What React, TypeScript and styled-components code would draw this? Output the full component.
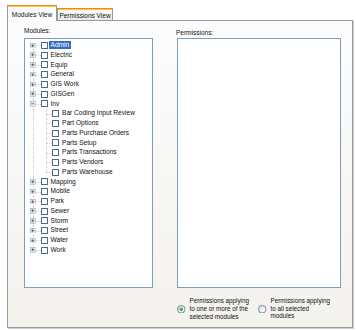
import React from "react";
import styled, { createGlobalStyle, css } from "styled-components";

const Global = createGlobalStyle`
  html, body { margin: 0; padding: 0; background: #ffffff; }
  body { font-family: "Liberation Sans", Arial, sans-serif; color: #000; }
  * { box-sizing: border-box; }
`;

const Page = styled.div`
  width: 356px;
  height: 331px;
  padding: 5px 0 0 7px;
  overflow: hidden;
`;

const TabStrip = styled.div`
  display: flex;
  align-items: flex-start;
  height: 16px;
  position: relative;
  z-index: 2;
  margin-bottom: -1px;
`;

const Tab = styled.div<{ $active?: boolean }>`
  display: flex;
  align-items: center;
  justify-content: center;
  font-size: 6.5px;
  white-space: nowrap;
  color: #111;
  border: 1px solid #919b9c;
  border-top: 1px solid #e68b2c;
  border-bottom: none;
  box-shadow: inset 0 1px 0 #ffc73c;
  ${(p) =>
    p.$active
      ? css`
          width: 50px;
          height: 16px;
          padding-top: 2px;
          background: #fcfcfe;
        `
      : css`
          width: 56px;
          height: 12px;
          margin-top: 3px;
          padding-top: 1px;
          background: linear-gradient(#fefefe, #ecebe5);
        `}
`;

const Panel = styled.div`
  width: 346px;
  height: 308px;
  border: 1px solid #919b9c;
  box-shadow: 1px 1px 0 #d3d1c7;
  background: linear-gradient(180deg, #fcfcfe 0%, #f3f2ed 100%);
  padding: 5px 0 0 16px;
  display: grid;
  grid-template-columns: 129px 164px;
  grid-template-rows: 12px 250px auto;
  column-gap: 24px;
`;

const FieldLabel = styled.div<{ $shift?: number }>`
  font-size: 6.5px;
  line-height: 10px;
  padding-top: ${(p) => p.$shift ?? 0}px;
  margin-left: ${(p) => (p.$shift ? -1 : 0)}px;
  color: #111;
`;

const ListBox = styled.div`
  border: 1px solid #7f9db9;
  background: #ffffff;
  overflow: hidden;
`;

const Tree = styled(ListBox)`
  padding-top: 1.4px;
`;

const Row = styled.div`
  display: flex;
  align-items: center;
  height: 9.75px;
  font-size: 6.6px;
  white-space: nowrap;
  color: #111;
`;

const LineCell = styled.div<{ $w: number; $first?: boolean; $last?: boolean; $stub?: boolean }>`
  position: relative;
  width: ${(p) => p.$w}px;
  align-self: stretch;
  display: flex;
  align-items: center;
  justify-content: center;
  flex: none;
  &::before {
    content: "";
    position: absolute;
    left: 50%;
    top: ${(p) => (p.$first ? "50%" : "0")};
    bottom: ${(p) => (p.$last ? "50%" : "0")};
    border-left: 1px dotted #cfcfcf;
  }
  &::after {
    content: "";
    position: absolute;
    left: 50%;
    right: 0;
    top: 50%;
    border-top: ${(p) => (p.$stub ? "1px dotted #cfcfcf" : "none")};
  }
`;

const ExpanderIcon = styled.svg`
  position: relative;
  z-index: 1;
  display: block;
`;

const CheckBox = styled.div<{ $ml: number }>`
  width: 7px;
  height: 7px;
  flex: none;
  margin-left: ${(p) => p.$ml}px;
  border: 1px solid #4a6a92;
  background: #ffffff;
`;

const ItemText = styled.span<{ $selected?: boolean; $ml: number }>`
  margin-left: ${(p) => p.$ml}px;
  padding: 0 1.5px;
  height: 8.3px;
  line-height: 8.3px;
  ${(p) =>
    p.$selected &&
    css`
      background: #316ac5;
      color: #ffffff;
    `}
`;

const RadioGroup = styled.div`
  grid-column: 2;
  display: flex;
  padding-top: 3px;
`;

const RadioOption = styled.div<{ $w: number }>`
  width: ${(p) => p.$w}px;
  display: flex;
  align-items: center;
  flex: none;
`;

const RadioText = styled.div<{ $dy?: number }>`
  font-size: 6.3px;
  line-height: 7.8px;
  color: #111;
  margin-left: 4px;
  margin-top: ${(p) => p.$dy ?? 0}px;
`;

function Expander({ open }: { open: boolean }) {
  return (
    <ExpanderIcon width="5.5" height="5.5" viewBox="0 0 9 9">
      <rect x="0.5" y="0.5" width="8" height="8" fill="#f6f6f4" stroke="#8ba2ba" />
      <line x1="2" y1="4.5" x2="7" y2="4.5" stroke="#1a1a1a" />
      {!open && <line x1="4.5" y1="2" x2="4.5" y2="7" stroke="#1a1a1a" />}
    </ExpanderIcon>
  );
}

function Radio({ checked }: { checked: boolean }) {
  const id = checked ? "rg1" : "rg2";
  return (
    <svg width="8.5" height="8.5" viewBox="0 0 13 13" style={{ flex: "none" }}>
      <defs>
        <linearGradient id={id} x1="0" y1="0" x2="1" y2="1">
          <stop offset="0" stopColor="#dcdcd5" />
          <stop offset="1" stopColor="#ffffff" />
        </linearGradient>
      </defs>
      <circle cx="6.5" cy="6.5" r="5.8" fill={`url(#${id})`} stroke="#2f5a8a" strokeWidth="1" />
      {checked && <circle cx="6.5" cy="6.5" r="2.6" fill="#2aa82a" />}
      {checked && <circle cx="6" cy="6" r="1" fill="#6fd66f" />}
    </svg>
  );
}

type Node = { name: string; children?: string[] };

const modules: Node[] = [
  { name: "Admin" },
  { name: "Electric" },
  { name: "Equip" },
  { name: "General" },
  { name: "GIS Work" },
  { name: "GISGen" },
  {
    name: "Inv",
    children: [
      "Bar Coding Input Review",
      "Part Options",
      "Parts Purchase Orders",
      "Parts Setup",
      "Parts Transactions",
      "Parts Vendors",
      "Parts Warehouse",
    ],
  },
  { name: "Mapping" },
  { name: "Mobile" },
  { name: "Park" },
  { name: "Sewer" },
  { name: "Storm" },
  { name: "Street" },
  { name: "Water" },
  { name: "Work" },
];

export default function App() {
  const rows: React.ReactNode[] = [];
  modules.forEach((m, i) => {
    const first = i === 0;
    const last = i === modules.length - 1;
    const open = !!m.children;
    rows.push(
      <Row key={m.name}>
        <LineCell $w={15.5} $first={first} $last={last} $stub>
          <Expander open={open} />
        </LineCell>
        <CheckBox $ml={0.2} />
        <ItemText $ml={1.3} $selected={m.name === "Admin"}>
          {m.name}
        </ItemText>
      </Row>
    );
    if (m.children) {
      m.children.forEach((c, j) => {
        rows.push(
          <Row key={c}>
            <LineCell $w={15.5} />
            <LineCell $w={11.5} $last={j === m.children!.length - 1} $stub />
            <CheckBox $ml={0} />
            <ItemText $ml={1.5}>{c}</ItemText>
          </Row>
        );
      });
    }
  });

  return (
    <Page>
      <Global />
      <TabStrip>
        <Tab $active>Modules View</Tab>
        <Tab>Permissions View</Tab>
      </TabStrip>
      <Panel>
        <FieldLabel>Modules:</FieldLabel>
        <FieldLabel $shift={1.5}>Permissions:</FieldLabel>
        <Tree>{rows}</Tree>
        <ListBox />
        <RadioGroup>
          <RadioOption $w={81}>
            <Radio checked />
            <RadioText>
              Permissions applying
              <br />
              to one or more of the
              <br />
              selected modules
            </RadioText>
          </RadioOption>
          <RadioOption $w={83}>
            <Radio checked={false} />
            <RadioText $dy={-1}>
              Permissions applying
              <br />
              to all selected
              <br />
              modules
            </RadioText>
          </RadioOption>
        </RadioGroup>
      </Panel>
    </Page>
  );
}
